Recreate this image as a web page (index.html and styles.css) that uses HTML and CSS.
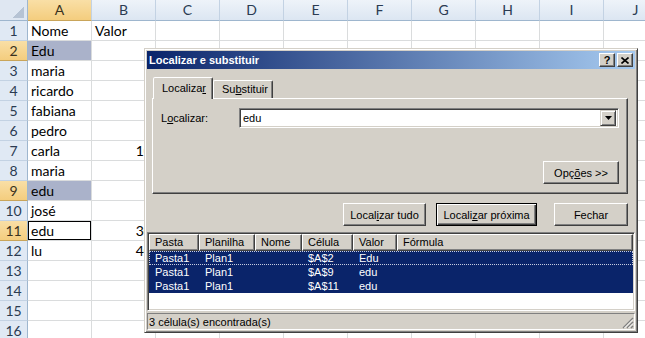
FILE: index.html
```html
<!DOCTYPE html>
<html lang="pt">
<head>
    <meta charset="UTF-8">
    <title>Localizar e substituir</title>
    <link rel="stylesheet" href="styles.css">
</head>
<body>

    <div class="sheet">
        <div class="corner"></div><div class="ch on">A</div><div class="ch">B</div><div class="ch">C</div><div class="ch">D</div><div class="ch">E</div><div class="ch">F</div><div class="ch">G</div><div class="ch">H</div><div class="ch">I</div><div class="ch">J</div>
        <div class="rh">1</div><div>Nome</div><div>Valor</div><div></div><div></div><div></div><div></div><div></div><div></div><div></div><div></div>
        <div class="rh on">2</div><div class="sel">Edu</div><div></div><div></div><div></div><div></div><div></div><div></div><div></div><div></div><div></div>
        <div class="rh">3</div><div>maria</div><div></div><div></div><div></div><div></div><div></div><div></div><div></div><div></div><div></div>
        <div class="rh">4</div><div>ricardo</div><div></div><div></div><div></div><div></div><div></div><div></div><div></div><div></div><div></div>
        <div class="rh">5</div><div>fabiana</div><div></div><div></div><div></div><div></div><div></div><div></div><div></div><div></div><div></div>
        <div class="rh">6</div><div>pedro</div><div></div><div></div><div></div><div></div><div></div><div></div><div></div><div></div><div></div>
        <div class="rh">7</div><div>carla</div><div class="num">10</div><div></div><div></div><div></div><div></div><div></div><div></div><div></div><div></div>
        <div class="rh">8</div><div>maria</div><div></div><div></div><div></div><div></div><div></div><div></div><div></div><div></div><div></div>
        <div class="rh on">9</div><div class="sel">edu</div><div></div><div></div><div></div><div></div><div></div><div></div><div></div><div></div><div></div>
        <div class="rh">10</div><div>josé</div><div></div><div></div><div></div><div></div><div></div><div></div><div></div><div></div><div></div>
        <div class="rh on">11</div><div class="act">edu</div><div class="num">30</div><div></div><div></div><div></div><div></div><div></div><div></div><div></div><div></div>
        <div class="rh">12</div><div>lu</div><div class="num">40</div><div></div><div></div><div></div><div></div><div></div><div></div><div></div><div></div>
        <div class="rh">13</div><div></div><div></div><div></div><div></div><div></div><div></div><div></div><div></div><div></div><div></div>
        <div class="rh">14</div><div></div><div></div><div></div><div></div><div></div><div></div><div></div><div></div><div></div><div></div>
        <div class="rh">15</div><div></div><div></div><div></div><div></div><div></div><div></div><div></div><div></div><div></div><div></div>
        <div class="rh">16</div><div></div><div></div><div></div><div></div><div></div><div></div><div></div><div></div><div></div><div></div>
    </div>

    <div class="dialog">
        <div class="titlebar">
            <span>Localizar e substituir</span>
            <div class="tbtns">
                <span class="tb">?</span>
                <span class="tb"><svg width="8" height="7" viewBox="0 0 8 7"><path d="M0.5 0.5 L7.5 6.5 M7.5 0.5 L0.5 6.5" stroke="#000" stroke-width="1.6"/></svg></span>
            </div>
        </div>

        <div class="tabs">
            <div class="tab on">Localiza<u>r</u></div>
            <div class="tab">Su<u>b</u>stituir</div>
        </div>

        <div class="panel">
            <div class="field">
                <label>L<u>o</u>calizar:</label>
                <div class="combo">
                    <span>edu</span>
                    <span class="drop"><svg width="7" height="4" viewBox="0 0 7 4"><path d="M0 0 H7 L3.5 4 Z" fill="#000"/></svg></span>
                </div>
            </div>
            <div class="opts"><span class="btn w-opts">Opç<u>õ</u>es &gt;&gt;</span></div>
        </div>

        <div class="actions">
            <span class="btn w-all">Local<u>i</u>zar tudo</span>
            <span class="btn def w-next">Locali<u>z</u>ar próxima</span>
            <span class="btn w-close">Fechar</span>
        </div>

        <div class="results">
            <div class="rhead"><span>Pasta</span><span>Planilha</span><span>Nome</span><span>Célula</span><span>Valor</span><span>Fórmula</span></div>
            <div class="rrow focus"><span>Pasta1</span><span>Plan1</span><span></span><span>$A$2</span><span>Edu</span><span></span></div>
            <div class="rrow"><span>Pasta1</span><span>Plan1</span><span></span><span>$A$9</span><span>edu</span><span></span></div>
            <div class="rrow"><span>Pasta1</span><span>Plan1</span><span></span><span>$A$11</span><span>edu</span><span></span></div>
        </div>

        <div class="status">
            <span>3 célula(s) encontrada(s)</span>
            <svg class="grip" width="12" height="12" viewBox="0 0 12 12">
                <path d="M11 1 L1 11 M11 5 L5 11 M11 9 L9 11" stroke="#808080" stroke-width="1.4"/>
                <path d="M11 2.5 L2.5 11 M11 6.5 L6.5 11" stroke="#fff" stroke-width="1"/>
            </svg>
        </div>
    </div>

</body>
</html>
```

FILE: styles.css
```css
:root { --face: #d4d0c8; --shadow: #808080; --dark: #404040; --grid: #dadcdd; --navy: #0a246a; }
body { margin: 0; width: 645px; height: 338px; overflow: hidden; position: relative; background: #fff; font-family: Lato, "Liberation Sans", sans-serif; }

/* PLANILHA */
.sheet { display: grid; grid-template-columns: 28px repeat(10, 64px); grid-template-rows: 21px; grid-auto-rows: 20px; font-size: 14px; color: #000; }
.sheet > div { box-sizing: border-box; border-right: 1px solid var(--grid); border-bottom: 1px solid var(--grid); padding: 0 3px; line-height: 20px; white-space: nowrap; overflow: hidden; }
.sheet .corner { background: linear-gradient(135deg, transparent 50%, #b6c3d4 50%) no-repeat right 3px bottom 2px / 12px 11px, #dfe7f2; border-color: #9eb6ce; }
.sheet .ch { background: linear-gradient(#eef3f9, #dce6f2); border-right-color: #c3d2e3; border-bottom-color: #9eb6ce; text-align: center; color: #2b3b52; }
.sheet .rh { background: #e0e9f4; border-right-color: #9eb6ce; border-bottom-color: #c3d2e3; text-align: center; color: #2b3b52; padding: 0; }
.sheet .ch.on, .sheet .rh.on { background: linear-gradient(#f9dfa6, #f4cd7e); border-bottom-color: #c9a55a; color: #3a3220; }
.sheet .sel { background: #aab2ca; }
.sheet .act { box-shadow: inset 0 0 0 1px #000; }
.sheet .num { text-align: right; }

/* JANELA */
.dialog { position: absolute; left: 144px; top: 48px; width: 494px; height: 285px; box-sizing: border-box; padding: 2px; background: var(--face); border: 1px solid; border-color: var(--face) var(--dark) var(--dark) var(--face); box-shadow: inset 1px 1px #fff, inset -1px -1px var(--shadow); font: 11px "Liberation Sans", Arial, sans-serif; color: #000; display: flex; flex-direction: column; }

.titlebar { height: 18px; flex: none; display: flex; align-items: center; padding: 0 2px 0 2px; background: linear-gradient(to right, var(--navy), #a6caf0); color: #fff; font-weight: bold; }
.tbtns { margin-left: auto; display: flex; gap: 2px; }
.tb { width: 16px; height: 14px; box-sizing: border-box; display: flex; align-items: center; justify-content: center; background: var(--face); color: #000; font-size: 11px; border: 1px solid; border-color: #fff var(--dark) var(--dark) #fff; box-shadow: inset -1px -1px var(--shadow); }

.tabs { display: flex; align-items: flex-end; height: 21px; flex: none; margin: 8px 0 0 6px; }
.tab { box-sizing: border-box; height: 18px; width: 60px; padding: 2px 0 0 8px; border: 1px solid; border-bottom: none; border-color: #fff var(--dark) transparent #fff; box-shadow: inset -1px 0 var(--shadow); border-radius: 2px 2px 0 0; }
.tab.on { position: relative; height: 22px; margin-bottom: -1px; padding-top: 4px; background: var(--face); }

.panel { box-sizing: border-box; height: 96px; flex: none; margin: 0 7px 0 5px; padding: 9px 8px 0 8px; border: 1px solid; border-color: #fff var(--dark) var(--dark) #fff; box-shadow: inset -1px -1px var(--shadow); }
.field { display: flex; align-items: center; }
.field label { width: 78px; flex: none; }
.combo { flex: 1; height: 20px; box-sizing: border-box; display: flex; align-items: center; padding: 2px; background: #fff; border: 1px solid; border-color: var(--shadow) #fff #fff var(--shadow); box-shadow: inset 1px 1px var(--dark), inset -1px -1px var(--face); }
.combo span:first-child { padding-left: 1px; }
.drop { margin-left: auto; width: 16px; height: 16px; box-sizing: border-box; display: flex; align-items: center; justify-content: center; background: var(--face); border: 1px solid; border-color: var(--face) var(--dark) var(--dark) var(--face); box-shadow: inset 1px 1px #fff, inset -1px -1px var(--shadow); }
.opts { display: flex; justify-content: flex-end; margin-top: 33px; }

.btn { box-sizing: border-box; height: 23px; display: flex; align-items: center; justify-content: center; background: var(--face); border: 1px solid; border-color: #fff var(--dark) var(--dark) #fff; box-shadow: inset -1px -1px var(--shadow); }
.btn.def { border-color: #000; box-shadow: inset 1px 1px #fff, inset -1px -1px var(--dark), inset -2px -2px var(--shadow); }
.w-opts { width: 76px; }
.w-all { width: 83px; margin-right: 10px; }
.w-next { width: 101px; margin-right: 17px; }
.w-close { width: 74px; }
.actions { display: flex; justify-content: flex-end; margin: 9px 7px 0 0; flex: none; }

/* RESULTADOS */
.results { box-sizing: border-box; height: 79px; flex: none; margin-top: 6px; padding: 1px; background: #fff; border: 1px solid; border-color: var(--shadow) #fff #fff var(--shadow); box-shadow: inset 1px 1px var(--dark), inset -1px -1px var(--face); }
.rhead, .rrow { display: grid; grid-template-columns: 50px 56px 47px 51px 44px 1fr; }
.rhead span { box-sizing: border-box; height: 17px; line-height: 15px; padding-left: 5px; background: var(--face); border: 1px solid; border-color: #fff var(--dark) var(--dark) #fff; box-shadow: inset -1px -1px var(--shadow); }
.rrow { height: 14px; line-height: 14px; background: var(--navy); color: #fff; }
.rrow span { padding-left: 6px; white-space: nowrap; }
.rrow.focus { outline: 1px dotted #c8cde0; outline-offset: -1px; }

.status { box-sizing: border-box; height: 17px; flex: none; margin-top: 2px; display: flex; align-items: center; padding-left: 1px; border: 1px solid; border-color: var(--shadow) #fff #fff var(--shadow); }
.grip { margin-left: auto; align-self: flex-end; }
```
